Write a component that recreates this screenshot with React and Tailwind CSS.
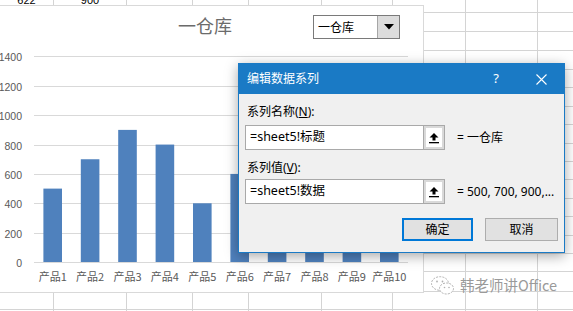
import React from "react";

const colW = ["w-[54px]", "w-[73px]", "w-[66px]", "w-[56px]", "w-[73px]", "w-[71px]", "w-[73px]", "w-[72px]", "w-[40px]"];
const rowH = ["h-[13px]", "h-[19px]", "h-[19px]", "h-[19px]", "h-[18px]", "h-[19px]", "h-[18px]", "h-[19px]", "h-[18px]", "h-[18px]", "h-[19px]", "h-[18px]", "h-[19px]", "h-[18px]", "h-[18px]", "h-[20px]", "h-[18px]", "h-[20px]"];

const values = [500, 700, 900, 800, 400, 600, 300, 500, 700, 600];
const ticks = [0, 200, 400, 600, 800, 1000, 1200, 1400];
const y0 = 262;
const scale = 205.5 / 1400;
const plotL = 34;
const plotR = 408;
const cat = (plotR - plotL) / 10;

function Grid() {
  return (
    <div className="flex flex-col">
      {rowH.map((h, r) => (
        <div key={r} className={"flex " + h}>
          {colW.map((w, c) => (
            <div
              key={c}
              className={"shrink-0 box-border border-r border-b border-[#d4d4d4] flex justify-center items-start overflow-visible " + w}
            >
              {r === 0 && c === 0 && <span className="-mt-[5px] text-[11px] leading-[11px] text-black">622</span>}
              {r === 0 && c === 1 && <span className="-mt-[5px] text-[11px] leading-[11px] text-black">900</span>}
            </div>
          ))}
        </div>
      ))}
    </div>
  );
}

function Chart() {
  return (
    <div className="absolute left-[-2px] top-[5px] w-[426px] h-[288px] border border-[#d9d9d9] bg-white overflow-hidden">
      <svg className="absolute left-[1px] top-[-6px]" width="573" height="311" viewBox="0 0 573 311">
        <text x="205" y="33" textAnchor="middle" fontSize="18" fill="#6b6b6b" fontFamily="'Noto Sans CJK SC', sans-serif">
          一仓库
        </text>
        {ticks.map((t) => {
          const y = Math.round(y0 - t * scale) + 0.5;
          return (
            <g key={t}>
              <line x1={plotL} x2={plotR} y1={y} y2={y} stroke="#d9d9d9" strokeWidth="1" />
              <text x="22" y={y + 4} textAnchor="end" fontSize="10.5" fill="#595959" fontFamily="'Liberation Sans', sans-serif">
                {t}
              </text>
            </g>
          );
        })}
        {values.map((v, i) => {
          const cx = plotL + cat * (i + 0.5);
          const h = v * scale;
          return <rect key={i} x={cx - 9.3} y={y0 - h} width="18.6" height={h} fill="#4f81bd" />;
        })}
        {values.map((v, i) => {
          const cx = plotL + cat * (i + 0.5);
          return (
            <text key={i} x={cx} y="281" textAnchor="middle" fontSize="11" fill="#595959" fontFamily="'Noto Sans CJK SC', sans-serif">
              {"产品" + (i + 1)}
            </text>
          );
        })}
      </svg>
    </div>
  );
}

function Dropdown() {
  return (
    <div className="absolute left-[313px] top-[15px] w-[87px] h-[24px] border border-[#7a7a7a] bg-white flex">
      <div className="flex-1 flex items-center pl-[4px] text-[12px] text-black font-['Noto_Sans_CJK_SC',sans-serif]">一仓库</div>
      <div className="w-[22px] bg-[#dcdcdc] border-l border-[#a6a6a6] flex items-center justify-center">
        <svg width="10" height="6" viewBox="0 0 10 6">
          <path d="M0 0 H10 L5 5.5 Z" fill="#000" />
        </svg>
      </div>
    </div>
  );
}

function UpIcon() {
  return (
    <svg width="10" height="12" viewBox="0 0 10 12">
      <path d="M5 1 L9.5 5.5 H6.5 V8.5 H3.5 V5.5 H0.5 Z" fill="#000" />
      <rect x="0" y="10" width="10" height="1.3" fill="#000" />
    </svg>
  );
}

function RefInput({ text }) {
  return (
    <div className="w-[200px] h-[25px] border border-[#a9a9a9] bg-white flex">
      <div className="flex-1 flex items-center pl-[4px] text-[12.5px] text-black">{text}</div>
      <div className="w-[21px] border-l border-[#a9a9a9] bg-[#d9d9d9] p-[2px] flex">
        <div className="flex-1 bg-white flex items-center justify-center">
          <UpIcon />
        </div>
      </div>
    </div>
  );
}

function Dialog() {
  return (
    <div className="absolute left-[238px] top-[63px] w-[327px] h-[190px] border border-[#1a7ac5] bg-[#f0f0f0] shadow-[0_3px_12px_rgba(0,0,0,0.35)] flex flex-col font-['Noto_Sans','Noto_Sans_CJK_SC',sans-serif]">
      <div className="h-[30px] bg-[#1a7ac5] flex items-center text-white text-[12px]">
        <div className="flex-1 pl-[8px]">编辑数据系列</div>
        <div className="w-[44px] flex justify-center text-[13px]">?</div>
        <div className="w-[46px] flex justify-center">
          <svg width="11" height="11" viewBox="0 0 11 11">
            <path d="M0.5 0.5 L10.5 10.5 M10.5 0.5 L0.5 10.5" stroke="#fff" strokeWidth="1.1" />
          </svg>
        </div>
      </div>
      <div className="flex flex-col px-[6px] pt-[10px] text-[12px] text-black">
        <div className="h-[16px] leading-[16px] ml-[2px]">
          系列名称(<span className="underline">N</span>):
        </div>
        <div className="mt-[5px] flex items-center gap-[12px]">
          <RefInput text="=sheet5!标题" />
          <span className="text-[12px]">= 一仓库</span>
        </div>
        <div className="mt-[10px] h-[16px] leading-[16px] ml-[2px]">
          系列值(<span className="underline">V</span>):
        </div>
        <div className="mt-[3px] flex items-center gap-[12px]">
          <RefInput text="=sheet5!数据" />
          <span className="text-[12px] whitespace-nowrap">= 500, 700, 900,...</span>
        </div>
        <div className="mt-[14px] flex justify-end gap-[12px] pr-[0px]">
          <div className="w-[71px] h-[23px] border-2 border-[#0078d7] bg-[#e1e1e1] flex items-center justify-center text-[12px]">确定</div>
          <div className="w-[73px] h-[23px] border border-[#adadad] bg-[#e1e1e1] flex items-center justify-center text-[12px]">取消</div>
        </div>
      </div>
    </div>
  );
}

function Watermark() {
  return (
    <div className="absolute left-[430px] top-[275px] flex items-center gap-[5px]">
      <svg width="25" height="21" viewBox="0 0 25 21">
        <ellipse cx="10" cy="8.5" rx="8.5" ry="6.8" fill="#fff" stroke="#b0b0b0" strokeWidth="1" strokeDasharray="2 1.2" />
        <ellipse cx="16.5" cy="13.5" rx="7" ry="5.5" fill="#fff" stroke="#b0b0b0" strokeWidth="1" strokeDasharray="2 1.2" />
        <circle cx="7" cy="6.5" r="0.9" fill="#b0b0b0" />
        <circle cx="12.5" cy="6.5" r="0.9" fill="#b0b0b0" />
        <circle cx="14.5" cy="12.5" r="0.8" fill="#b0b0b0" />
        <circle cx="19" cy="12.5" r="0.8" fill="#b0b0b0" />
      </svg>
      <span className="text-[14.5px] text-[#9a9a9a] font-['Noto_Sans_CJK_SC',sans-serif] leading-none">韩老师讲Office</span>
    </div>
  );
}

export default function App() {
  return (
    <div className="relative w-[573px] h-[311px] overflow-hidden bg-white font-['Liberation_Sans','Noto_Sans_CJK_SC',sans-serif]">
      <Grid />
      <Chart />
      <Dropdown />
      <Dialog />
      <Watermark />
    </div>
  );
}
